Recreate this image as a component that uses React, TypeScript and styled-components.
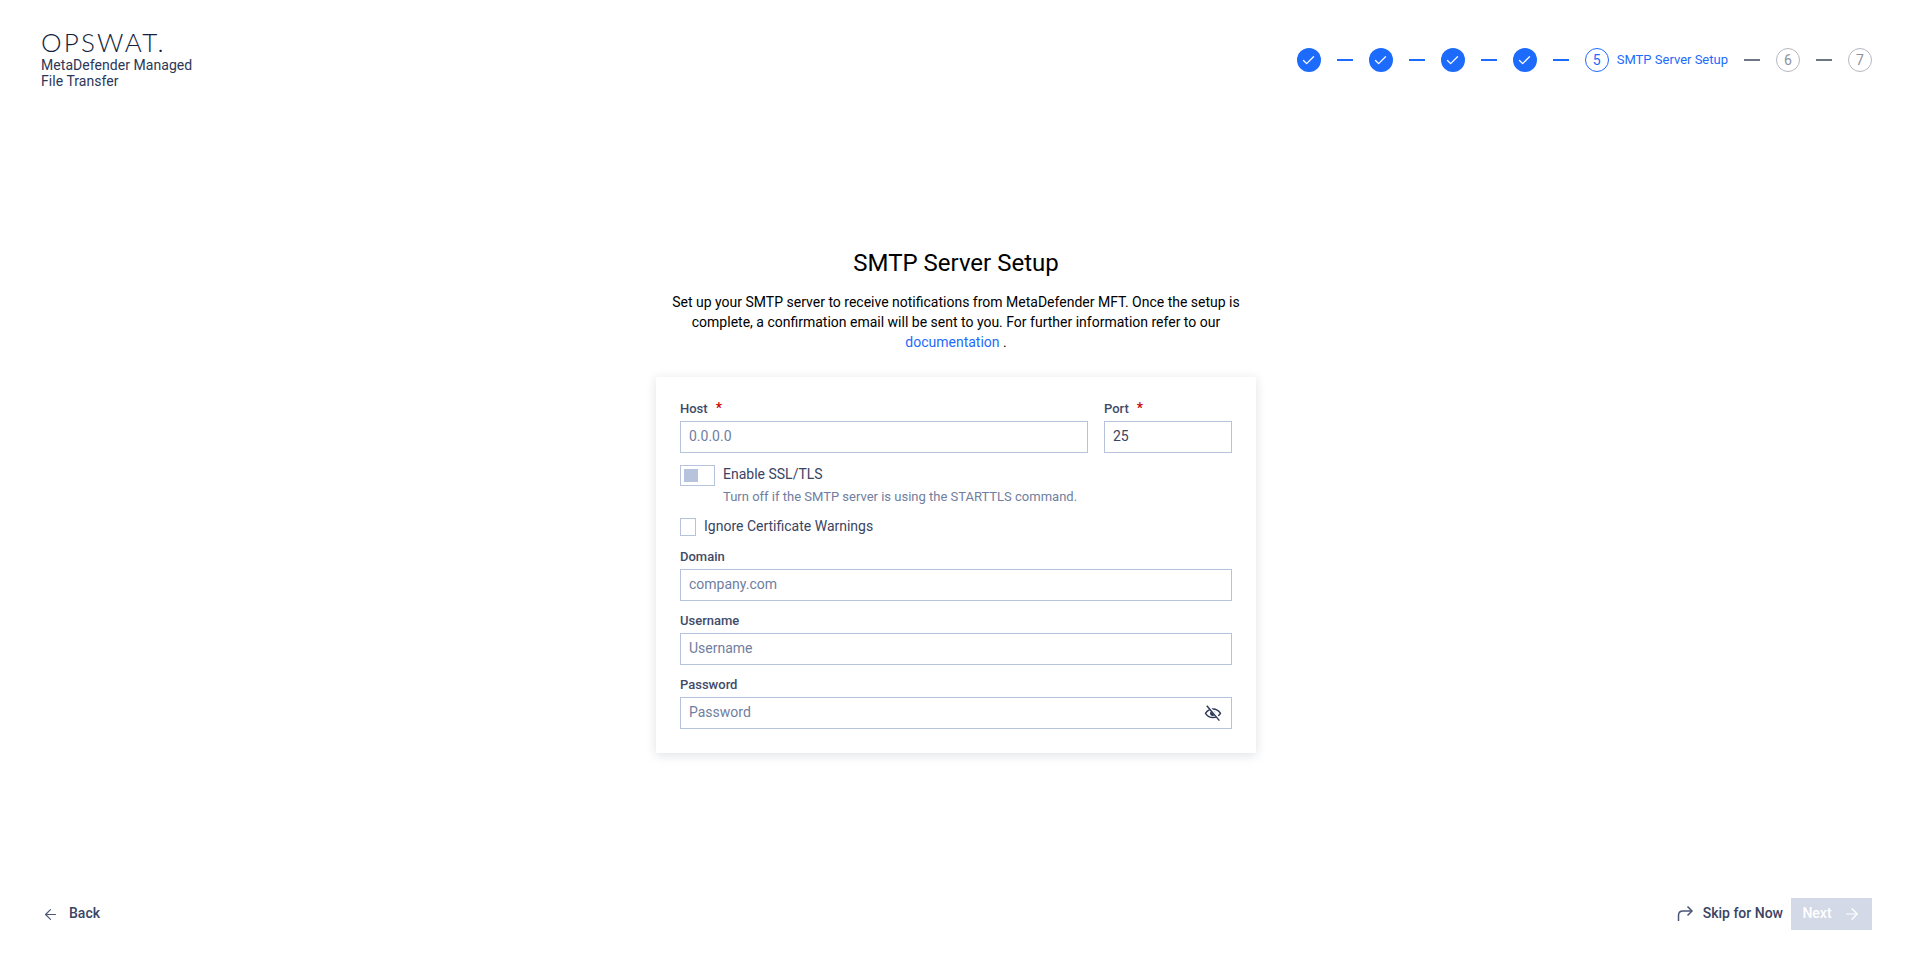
import { ReactNode } from 'react';
import styled, { createGlobalStyle } from 'styled-components';
import { ArrowLeft, ArrowRight, Check } from 'lucide-react';

const GlobalStyle = createGlobalStyle`
  html, body {
    margin: 0;
    padding: 0;
    background: #fff;
  }
  body {
    font-family: Roboto, "Liberation Sans", sans-serif;
    color: #1d2846;
  }
  * {
    box-sizing: border-box;
  }
`;

const STEP_DONE = [1, 2, 3, 4];

const Field = ({
  label,
  required,
  placeholder,
  value,
  children,
}: {
  label: string;
  required?: boolean;
  placeholder?: string;
  value?: string;
  children?: ReactNode;
}) => (
  <FieldWrap>
    <FieldLabel>
      {label}
      {required && <Req>*</Req>}
    </FieldLabel>
    <InputWrap>
      <TextInput placeholder={placeholder} defaultValue={value} />
      {children}
    </InputWrap>
  </FieldWrap>
);

const EyeOffIcon = () => (
  <svg width="18" height="18" viewBox="0 0 18 18" fill="none" stroke="#2c3757" strokeWidth="1.4">
    <path d="M1.500 9.300C3.400 6.500 6 5 9 5s5.600 1.500 7.500 4.300C14.600 12.100 12 13.500 9 13.500S3.400 12.100 1.500 9.300z" />
    <circle cx="8.700" cy="9.300" r="2.600" fill="#2c3757" stroke="none" />
    <path d="M3.600 1.600 16 15.800" stroke="#fff" strokeWidth="2.600" />
    <path d="M2.800 1.800 15.400 16.600" />
  </svg>
);

const SkipIcon = () => (
  <svg width="18" height="18" viewBox="0 0 18 18" fill="none" stroke="#4b5674" strokeWidth="1.5">
    <path d="M2.500 16V10.500C2.500 7.800 4.300 6 7 6h9" />
    <path d="M11.500 1.500 16 6l-4.500 4.500" />
  </svg>
);

export default function App() {
  return (
    <>
      <GlobalStyle />
      <Page>
        <Header>
          <Brand>
            <Logo>OPSWAT.</Logo>
            <Product>
              MetaDefender Managed
              <br />
              File Transfer
            </Product>
          </Brand>
          <Stepper>
            {STEP_DONE.map((n) => (
              <StepGroup key={n}>
                <DoneDot>
                  <Check size={15} strokeWidth={2} />
                </DoneDot>
                <Dash $on />
              </StepGroup>
            ))}
            <StepGroup>
              <NumDot $active>5</NumDot>
              <StepName>SMTP Server Setup</StepName>
              <Dash />
            </StepGroup>
            <StepGroup>
              <NumDot>6</NumDot>
              <Dash />
            </StepGroup>
            <NumDot>7</NumDot>
          </Stepper>
        </Header>

        <Main>
          <Title>SMTP Server Setup</Title>
          <Intro>
            Set up your SMTP server to receive notifications from MetaDefender MFT. Once the setup is complete, a
            confirmation email will be sent to you. For further information refer to our <DocLink href="#">documentation</DocLink> .
          </Intro>
          <Card>
            <TwoCols>
              <Field label="Host" required placeholder="0.0.0.0" />
              <Field label="Port" required value="25" />
            </TwoCols>
            <ToggleRow>
              <Toggle>
                <Thumb />
              </Toggle>
              <div>
                <ToggleTitle>Enable SSL/TLS</ToggleTitle>
                <Hint>Turn off if the SMTP server is using the STARTTLS command.</Hint>
              </div>
            </ToggleRow>
            <CheckRow>
              <CheckBox />
              <CheckText>Ignore Certificate Warnings</CheckText>
            </CheckRow>
            <Field label="Domain" placeholder="company.com" />
            <Field label="Username" placeholder="Username" />
            <Field label="Password" placeholder="Password">
              <EyeBtn>
                <EyeOffIcon />
              </EyeBtn>
            </Field>
          </Card>
        </Main>

        <Footer>
          <BackBtn>
            <ArrowLeft size={17} color="#4b5674" strokeWidth={1.6} />
            <BtnText>Back</BtnText>
          </BackBtn>
          <FooterRight>
            <GhostBtn>
              <SkipIcon />
              <BtnText>Skip for Now</BtnText>
            </GhostBtn>
            <NextBtn>
              <BtnText>Next</BtnText>
              <ArrowRight size={18} strokeWidth={1.6} />
            </NextBtn>
          </FooterRight>
        </Footer>
      </Page>
    </>
  );
}

const Page = styled.div`
  height: 100vh;
  display: flex;
  flex-direction: column;
  overflow: hidden;
`;

const Header = styled.header`
  display: flex;
  justify-content: space-between;
  align-items: flex-start;
  padding: 32px 40px 0 41px;
`;

const Brand = styled.div`
  display: flex;
  flex-direction: column;
`;

const Logo = styled.div`
  font-family: Lato, "Open Sans", sans-serif;
  font-weight: 300;
  font-size: 26px;
  line-height: 21px;
  letter-spacing: 2.2px;
  color: #141f3d;
`;

const Product = styled.div`
  font-size: 14px;
  line-height: 16px;
  margin-top: 4px;
  letter-spacing: 0.05px;
  color: #2c3757;
`;

const Stepper = styled.div`
  display: flex;
  align-items: center;
  gap: 16px;
  height: 56px;
`;

const StepGroup = styled.div`
  display: flex;
  align-items: center;
  gap: 16px;
`;

const DoneDot = styled.div`
  width: 24px;
  height: 24px;
  border-radius: 50%;
  background: #1d6bfc;
  color: #fff;
  display: flex;
  align-items: center;
  justify-content: center;
`;

const NumDot = styled.div<{ $active?: boolean }>`
  width: 24px;
  height: 24px;
  border-radius: 50%;
  border: 1px solid ${(p) => (p.$active ? '#1d6bfc' : '#b5b8c0')};
  color: ${(p) => (p.$active ? '#1d6bfc' : '#8d92a0')};
  font-size: 14px;
  display: flex;
  align-items: center;
  justify-content: center;
`;

const StepName = styled.span`
  font-size: 13px;
  line-height: 16px;
  margin-top: -1px;
  color: #1d6bfc;
  margin-left: -8px;
`;

const Dash = styled.div<{ $on?: boolean }>`
  width: 16px;
  height: 2px;
  background: ${(p) => (p.$on ? '#1d6bfc' : '#707583')};
`;

const Main = styled.main`
  flex: 1;
  display: flex;
  flex-direction: column;
  align-items: center;
  padding-top: 158px;
`;

const Title = styled.h1`
  margin: 0;
  font-size: 24px;
  line-height: 32px;
  font-weight: 400;
  color: #000;
`;

const Intro = styled.p`
  margin: 13px 0 0;
  width: 590px;
  text-align: center;
  font-size: 14px;
  line-height: 20px;
  color: #000;
`;

const DocLink = styled.a`
  color: #1d6bfc;
  text-decoration: none;
`;

const Card = styled.section`
  width: 600px;
  margin-top: 25px;
  padding: 24px;
  background: #fff;
  box-shadow: 0 2px 10px rgba(29, 40, 70, 0.14);
  display: flex;
  flex-direction: column;
  gap: 12px;
`;

const TwoCols = styled.div`
  display: grid;
  grid-template-columns: 1fr 128px;
  gap: 16px;
`;

const FieldWrap = styled.div`
  display: flex;
  flex-direction: column;
`;

const FieldLabel = styled.label`
  display: block;
  height: 16px;
  font-size: 13px;
  line-height: 16px;
  font-weight: 500;
  margin-bottom: 4px;
  color: #414b69;
`;

const Req = styled.span`
  color: #c60000;
  font-size: 14px;
  line-height: 0;
  margin-left: 8px;
`;

const InputWrap = styled.div`
  position: relative;
`;

const TextInput = styled.input`
  width: 100%;
  height: 32px;
  border: 1px solid #b7c2dd;
  border-radius: 0;
  outline: none;
  padding: 0 8px 2px;
  font-family: inherit;
  font-size: 14px;
  color: #3a4463;
  &::placeholder {
    color: #707ea0;
    opacity: 1;
  }
`;

const EyeBtn = styled.span`
  position: absolute;
  right: 10px;
  top: 7px;
  display: flex;
`;

const ToggleRow = styled.div`
  display: flex;
  gap: 8px;
`;

const Toggle = styled.div`
  width: 35px;
  height: 21px;
  border: 1px solid #b7c2dd;
  padding: 3px;
`;

const Thumb = styled.div`
  width: 14px;
  height: 100%;
  background: #b7c2dd;
`;

const ToggleTitle = styled.div`
  font-size: 14px;
  line-height: 20px;
  margin-top: -1px;
  color: #3a4463;
`;

const Hint = styled.div`
  font-size: 13px;
  line-height: 16px;
  margin-top: 5px;
  color: #707ea0;
`;

const CheckRow = styled.div`
  display: flex;
  align-items: center;
  gap: 8px;
  height: 20px;
  font-size: 14px;
  line-height: 20px;
  color: #3a4463;
`;

const CheckBox = styled.div`
  width: 16px;
  height: 18px;
  border: 1px solid #b7c2dd;
`;

const CheckText = styled.span`
  margin-top: -2px;
`;

const Footer = styled.footer`
  display: flex;
  justify-content: space-between;
  align-items: center;
  padding: 0 40px 32px;
`;

const FooterRight = styled.div`
  display: flex;
  align-items: center;
  gap: 8px;
`;

const BtnText = styled.span`
  margin-top: -2px;
`;

const GhostBtn = styled.button`
  border: none;
  background: none;
  padding: 0;
  height: 32px;
  display: flex;
  align-items: center;
  gap: 9px;
  font-family: inherit;
  font-size: 14px;
  font-weight: 500;
  color: #3a4463;
`;

const BackBtn = styled(GhostBtn)`
  margin-left: 2px;
  gap: 10px;
`;

const NextBtn = styled.button`
  width: 81px;
  height: 32px;
  padding: 0;
  border: none;
  background: #d3d9e7;
  color: #fff;
  display: flex;
  align-items: center;
  justify-content: center;
  gap: 11px;
  font-family: inherit;
  font-size: 14px;
  font-weight: 500;
`;
